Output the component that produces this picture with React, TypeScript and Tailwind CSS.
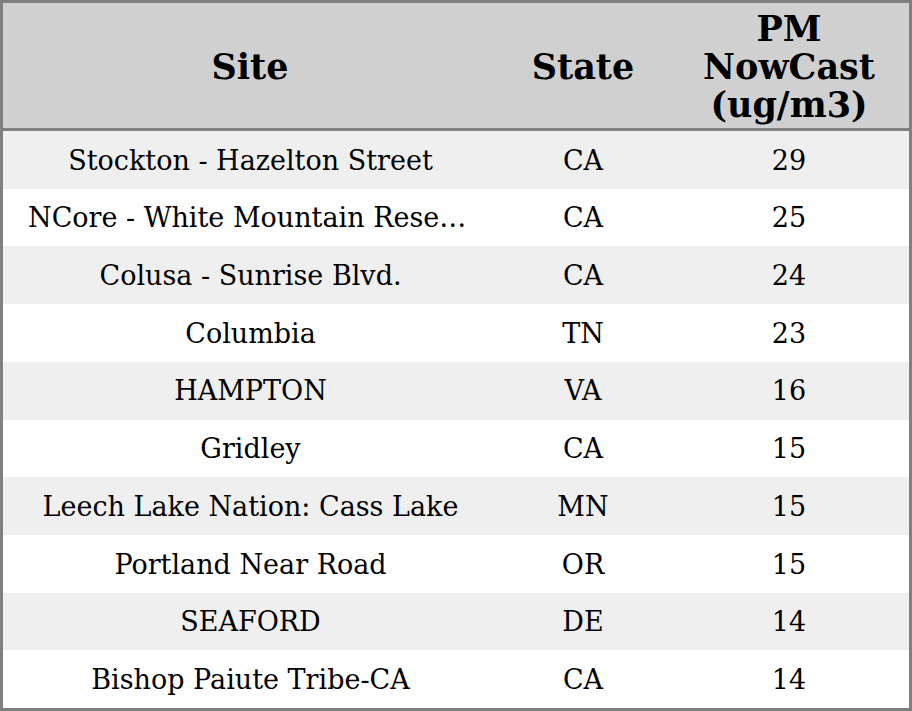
import React from 'react';

interface Row {
  site: string;
  state: string;
  pm: number;
}

const rows: Row[] = [
  { site: 'Stockton - Hazelton Street', state: 'CA', pm: 29 },
  { site: 'NCore - White Mountain Research Station', state: 'CA', pm: 25 },
  { site: 'Colusa - Sunrise Blvd.', state: 'CA', pm: 24 },
  { site: 'Columbia', state: 'TN', pm: 23 },
  { site: 'HAMPTON', state: 'VA', pm: 16 },
  { site: 'Gridley', state: 'CA', pm: 15 },
  { site: 'Leech Lake Nation: Cass Lake', state: 'MN', pm: 15 },
  { site: 'Portland Near Road', state: 'OR', pm: 15 },
  { site: 'SEAFORD', state: 'DE', pm: 14 },
  { site: 'Bishop Paiute Tribe-CA', state: 'CA', pm: 14 },
];

export default function App() {
  return (
    <div
      className="w-[912px] h-[711px] bg-white text-black"
      style={{ fontFamily: '"DejaVu Serif", "Liberation Serif", serif' }}
    >
      <div className="border-[3px] border-[#808080] h-[711px] flex flex-col">
        <div className="grid grid-cols-[494px_172px_240px] h-[128px] shrink-0 bg-[#d0d0d0] border-b-[3px] border-[#808080] font-bold text-[35px] leading-[38px] items-center text-center">
          <div className="pt-[2px]">Site</div>
          <div className="pt-[2px]">State</div>
          <div className="pt-[2px]">
            PM
            <br />
            NowCast
            <br />
            (ug/m3)
          </div>
        </div>
        {rows.map((row, i) => (
          <div
            key={row.site}
            className={`grid flex-1 grid-cols-[494px_172px_240px] items-center text-center text-[27px] pt-[2px] ${
              i % 2 === 0 ? 'bg-[#efefef]' : 'bg-white'
            }`}
          >
            <div className="pl-[25px] pr-[24px] truncate">{row.site}</div>
            <div>{row.state}</div>
            <div>{row.pm}</div>
          </div>
        ))}
      </div>
    </div>
  );
}
